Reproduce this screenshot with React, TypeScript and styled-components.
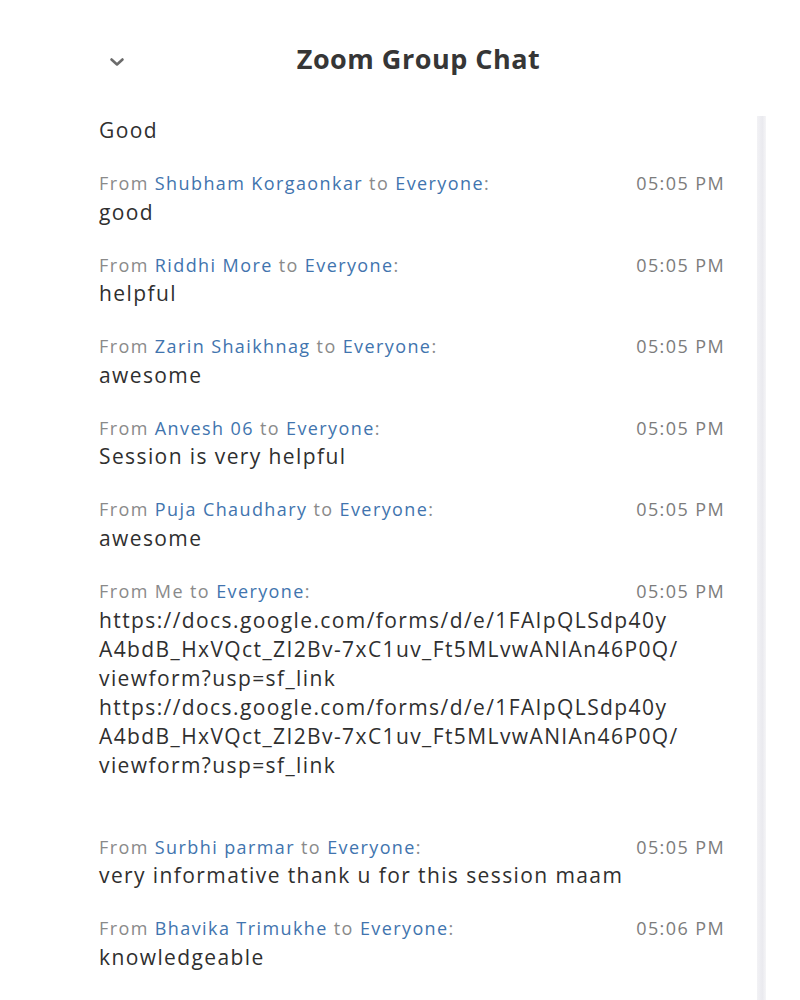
import styled, { createGlobalStyle } from "styled-components";

const GlobalStyle = createGlobalStyle`
  html, body {
    margin: 0;
    padding: 0;
    background: #ffffff;
  }
  body {
    font-family: "Open Sans", "Noto Sans", "Liberation Sans", sans-serif;
  }
`;

type Chat = {
  from: string;
  to: string;
  time: string;
  lines: string[];
};

const chats: Chat[] = [
  { from: "Shubham Korgaonkar", to: "Everyone", time: "05:05 PM", lines: ["good"] },
  { from: "Riddhi More", to: "Everyone", time: "05:05 PM", lines: ["helpful"] },
  { from: "Zarin Shaikhnag", to: "Everyone", time: "05:05 PM", lines: ["awesome"] },
  { from: "Anvesh 06", to: "Everyone", time: "05:05 PM", lines: ["Session is very helpful"] },
  { from: "Puja Chaudhary", to: "Everyone", time: "05:05 PM", lines: ["awesome"] },
  {
    from: "Me",
    to: "Everyone",
    time: "05:05 PM",
    lines: [
      "https://docs.google.com/forms/d/e/1FAIpQLSdp40y",
      "A4bdB_HxVQct_ZI2Bv-7xC1uv_Ft5MLvwANIAn46P0Q/",
      "viewform?usp=sf_link",
      "https://docs.google.com/forms/d/e/1FAIpQLSdp40y",
      "A4bdB_HxVQct_ZI2Bv-7xC1uv_Ft5MLvwANIAn46P0Q/",
      "viewform?usp=sf_link",
      "",
    ],
  },
  { from: "Surbhi parmar", to: "Everyone", time: "05:05 PM", lines: ["very informative thank u for this session maam"] },
  { from: "Bhavika Trimukhe", to: "Everyone", time: "05:06 PM", lines: ["knowledgeable"] },
];

export default function App() {
  return (
    <>
      <GlobalStyle />
      <Page>
        <Panel>
          <Header>
            <Collapse aria-label="collapse">
              <svg width="16" height="10" viewBox="0 0 16 10">
                <path d="M2.5 2.5 L8 7.5 L13.5 2.5" fill="none" stroke="#6b6b6b" strokeWidth="2.6" strokeLinecap="round" strokeLinejoin="round" />
              </svg>
            </Collapse>
            <Title>Zoom Group Chat</Title>
            <span />
          </Header>
          <Body>
            <List>
              <MessageLine>Good</MessageLine>
              {chats.map((c, i) => (
                <Entry key={i}>
                  <Meta>
                    <Sender>
                      From {c.from === "Me" ? "Me" : <Name>{c.from}</Name>} to <Name>{c.to}</Name>:
                    </Sender>
                    <Time>{c.time}</Time>
                  </Meta>
                  {c.lines.map((l, j) => (
                    <MessageLine key={j}>{l || "\u00a0"}</MessageLine>
                  ))}
                </Entry>
              ))}
            </List>
            <ScrollTrack />
          </Body>
        </Panel>
      </Page>
    </>
  );
}

const Page = styled.div`
  width: 800px;
  height: 1000px;
  overflow: hidden;
  background: #ffffff;
  padding-left: 80px;
  box-sizing: border-box;
`;

const Panel = styled.div`
  width: 686px;
  display: flex;
  flex-direction: column;
`;

const Header = styled.div`
  display: grid;
  grid-template-columns: 1fr auto 1fr;
  align-items: center;
  height: 116px;
  width: 677px;
`;

const Collapse = styled.button`
  justify-self: start;
  margin-left: 28px;
  margin-top: 8px;
  padding: 0;
  border: none;
  background: transparent;
  display: flex;
  align-items: center;
  justify-content: center;
  width: 18px;
  height: 14px;
`;

const Title = styled.h1`
  margin: 0;
  font-family: "Open Sans", "Noto Sans", sans-serif;
  font-weight: 700;
  font-size: 27px;
  color: #363636;
  letter-spacing: 0.5px;
`;

const Body = styled.div`
  display: flex;
  flex-direction: row;
  align-items: stretch;
`;

const List = styled.div`
  width: 677px;
  box-sizing: border-box;
  padding-left: 19px;
  padding-right: 32px;
  display: flex;
  flex-direction: column;
  gap: 23.6px;
`;

const Entry = styled.div`
  display: flex;
  flex-direction: column;
`;

const Meta = styled.div`
  display: flex;
  justify-content: space-between;
  align-items: center;
  height: 29px;
  font-size: 18px;
  letter-spacing: 1.4px;
  color: #8a8a8a;
`;

const Sender = styled.span`
  white-space: nowrap;
`;

const Name = styled.span`
  color: #4174ae;
`;

const Time = styled.span`
  color: #7c7c7c;
`;

const MessageLine = styled.div`
  font-size: 21px;
  line-height: 29px;
  height: 29px;
  letter-spacing: 1.4px;
  color: #2f2f2f;
  white-space: nowrap;
`;

const ScrollTrack = styled.div`
  width: 9px;
  min-height: 900px;
  background: linear-gradient(to right, #f2f2f5, #eaeaef 60%, #f5f5f7);
`;
